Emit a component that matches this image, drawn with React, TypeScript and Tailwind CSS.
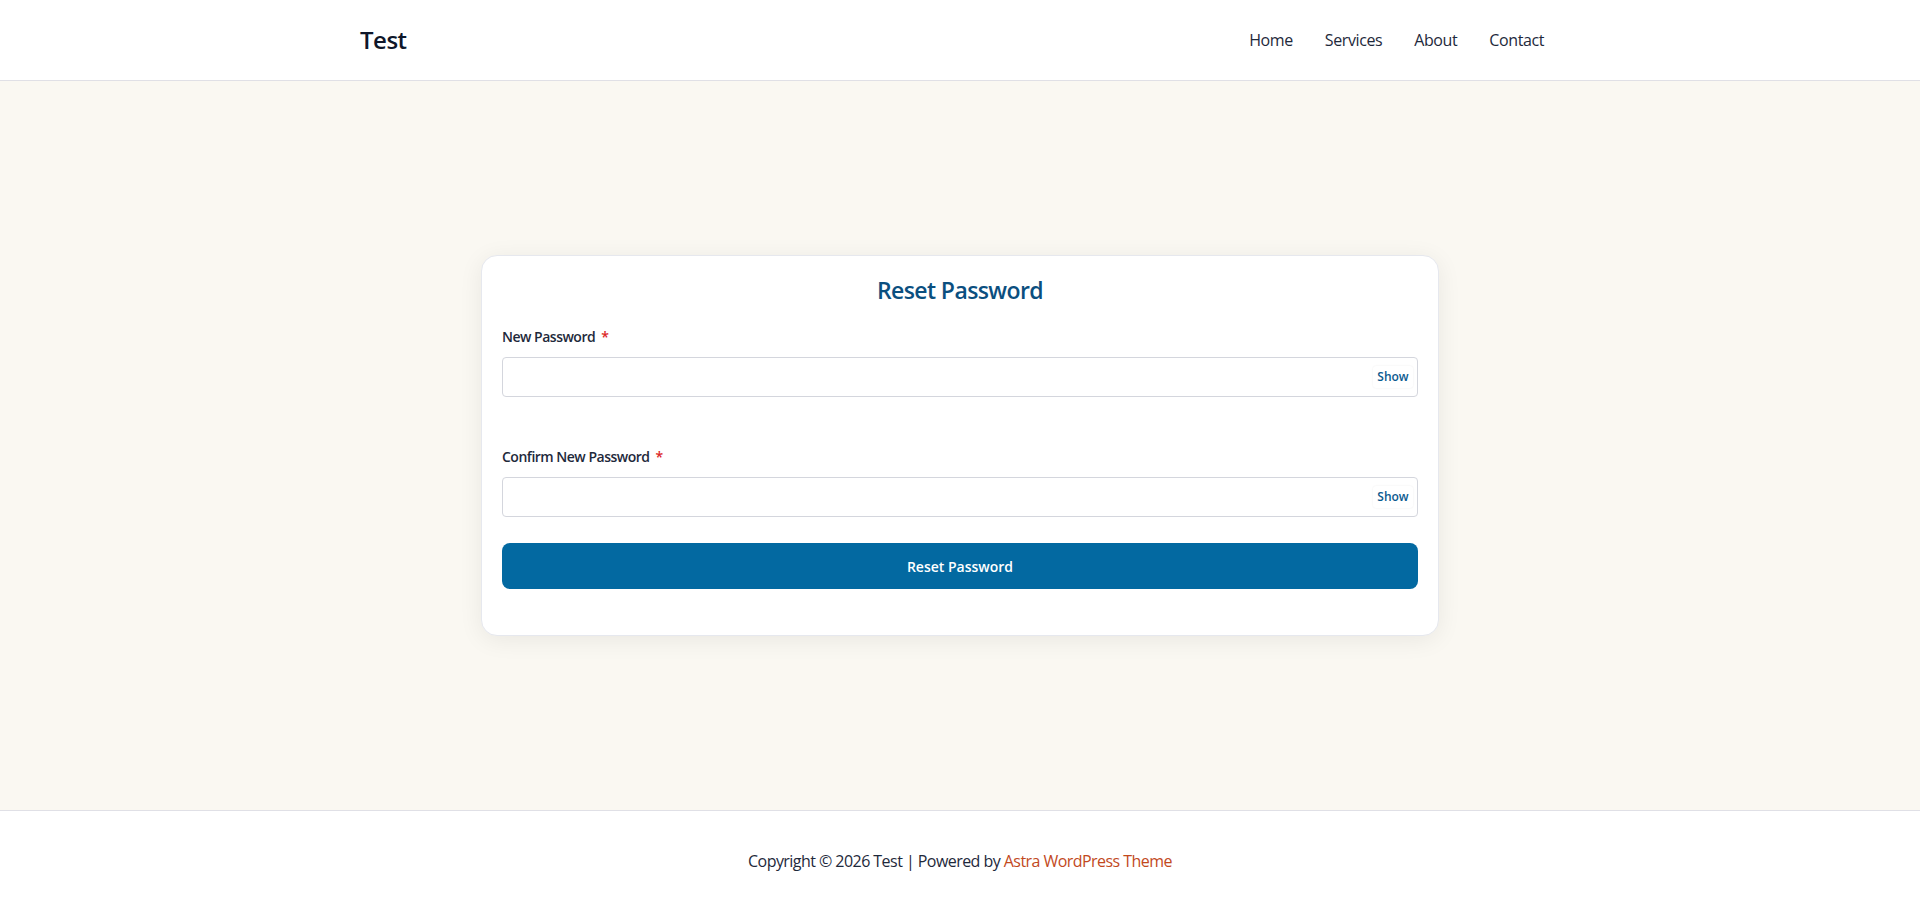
import React, { useState } from "react";

const NAV_ITEMS = ["Home", "Services", "About", "Contact"];

const PasswordField = ({ label, className }: { label: string; className?: string }) => {
  const [visible, setVisible] = useState(false);

  return (
    <div className={className}>
      <label className="block text-[14px] leading-5 font-semibold text-[#1e293b] mb-[10px] tracking-[-0.5px]">
        {label}
        <span className="text-[#dc2626] ml-[6px]">*</span>
      </label>
      <div className="relative h-10">
        <input
          type={visible ? "text" : "password"}
          className="w-full h-10 rounded-[4px] border border-[#d4d6dd] bg-white px-3 text-[14px] outline-none"
        />
        <button
          type="button"
          onClick={() => setVisible(!visible)}
          className="absolute right-[5px] top-1/2 -translate-y-1/2 h-[22px] w-10 rounded-[3px] bg-white text-[12px] font-semibold text-[#0b5a8f] shadow-[0_0_2px_rgba(0,0,0,0.08)]"
        >
          {visible ? "Hide" : "Show"}
        </button>
      </div>
    </div>
  );
};

export default function App() {
  return (
    <div
      className="flex flex-col min-h-screen bg-[#faf8f2]"
      style={{ fontFamily: '"Open Sans", "Noto Sans", sans-serif' }}
    >
      <header className="h-[81px] bg-white border-b border-[#e0e0e6]">
        <div className="w-[1200px] h-20 mx-auto flex items-center justify-between">
          <a className="text-[24px] font-semibold text-[#0f172a] tracking-[-0.5px]">Test</a>
          <nav className="flex items-center">
            {NAV_ITEMS.map((item) => (
              <a key={item} className="px-4 text-[16px] text-[#1e293b] tracking-[-0.4px]">
                {item}
              </a>
            ))}
          </nav>
        </div>
      </header>

      <main className="flex-1 flex items-center justify-center">
        <div className="w-[958px] rounded-2xl border border-[#e6e8ee] bg-white px-5 pt-5 pb-5 shadow-[0_4px_24px_rgba(0,0,0,0.07)]">
          <h2 className="text-[23px] leading-[29px] font-semibold text-center text-[#0b4f7f] mb-[22px] tracking-[-0.6px]">
            Reset Password
          </h2>
          <PasswordField label="New Password" className="mb-[50px]" />
          <PasswordField label="Confirm New Password" className="mb-[26px]" />
          <button
            type="button"
            className="w-full h-[46px] rounded-lg bg-[#0369a1] text-white text-[14px] font-semibold mb-[26px]"
          >
            Reset Password
          </button>
        </div>
      </main>

      <footer className="h-[101px] bg-white border-t border-[#e0e0e6] flex items-center justify-center">
        <p className="text-[16px] text-[#1e293b] tracking-[-0.55px]">
          Copyright © 2026 Test | Powered by{" "}
          <a className="text-[#c2491d]">Astra WordPress Theme</a>
        </p>
      </footer>
    </div>
  );
}
